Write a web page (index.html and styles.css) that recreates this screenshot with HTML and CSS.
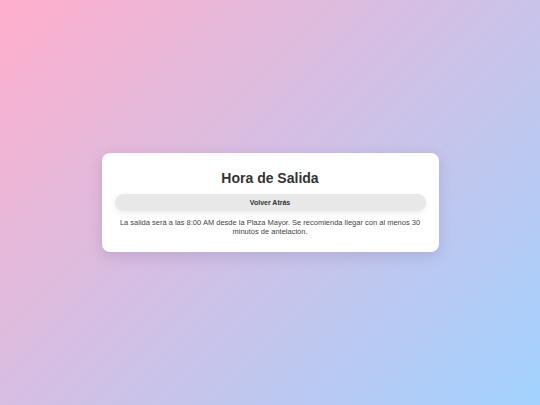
FILE: index.html
```html
<!DOCTYPE html>
<html lang="es">
<head>
<meta charset="utf-8">
<title>Hora de Salida</title>
<link rel="stylesheet" href="styles.css">
</head>
<body>
<main class="page">
  <section class="card">
    <h1 class="title">Hora de Salida</h1>
    <button class="back-btn" type="button">Volver Atrás</button>
    <p class="info">La salida será a las 8:00 AM desde la Plaza Mayor. Se recomienda llegar con al menos 30 minutos de antelación.</p>
  </section>
</main>
</body>
</html>
```
FILE: styles.css
```css
html, body {
  margin: 0;
  padding: 0;
  height: 100%;
}
body {
  font-family: "Liberation Sans", Arial, sans-serif;
  background: linear-gradient(135deg, #ffafcc 0%, #a2d2ff 100%);
  color: #333;
}
.page {
  height: 100%;
  display: flex;
  align-items: center;
  justify-content: center;
}
.card {
  box-sizing: border-box;
  width: 337px;
  background: #fff;
  border-radius: 8px;
  box-shadow: 0 4px 14px rgba(80, 60, 120, 0.18);
  padding: 17px 13px 16px;
  display: flex;
  flex-direction: column;
  align-items: stretch;
  text-align: center;
}
.title {
  margin: 0 0 8px;
  font-size: 14px;
  line-height: 16px;
  font-weight: bold;
  color: #333;
}
.back-btn {
  height: 17px;
  border: none;
  border-radius: 9px;
  background: #e8e8e8;
  box-shadow: 0 2px 6px rgba(0, 0, 0, 0.08);
  font-family: inherit;
  font-size: 7px;
  font-weight: bold;
  color: #333;
  padding: 0;
  margin: 0 0 7px;
}
.info {
  margin: 0;
  font-size: 7.5px;
  line-height: 9px;
  color: #444;
}
```
